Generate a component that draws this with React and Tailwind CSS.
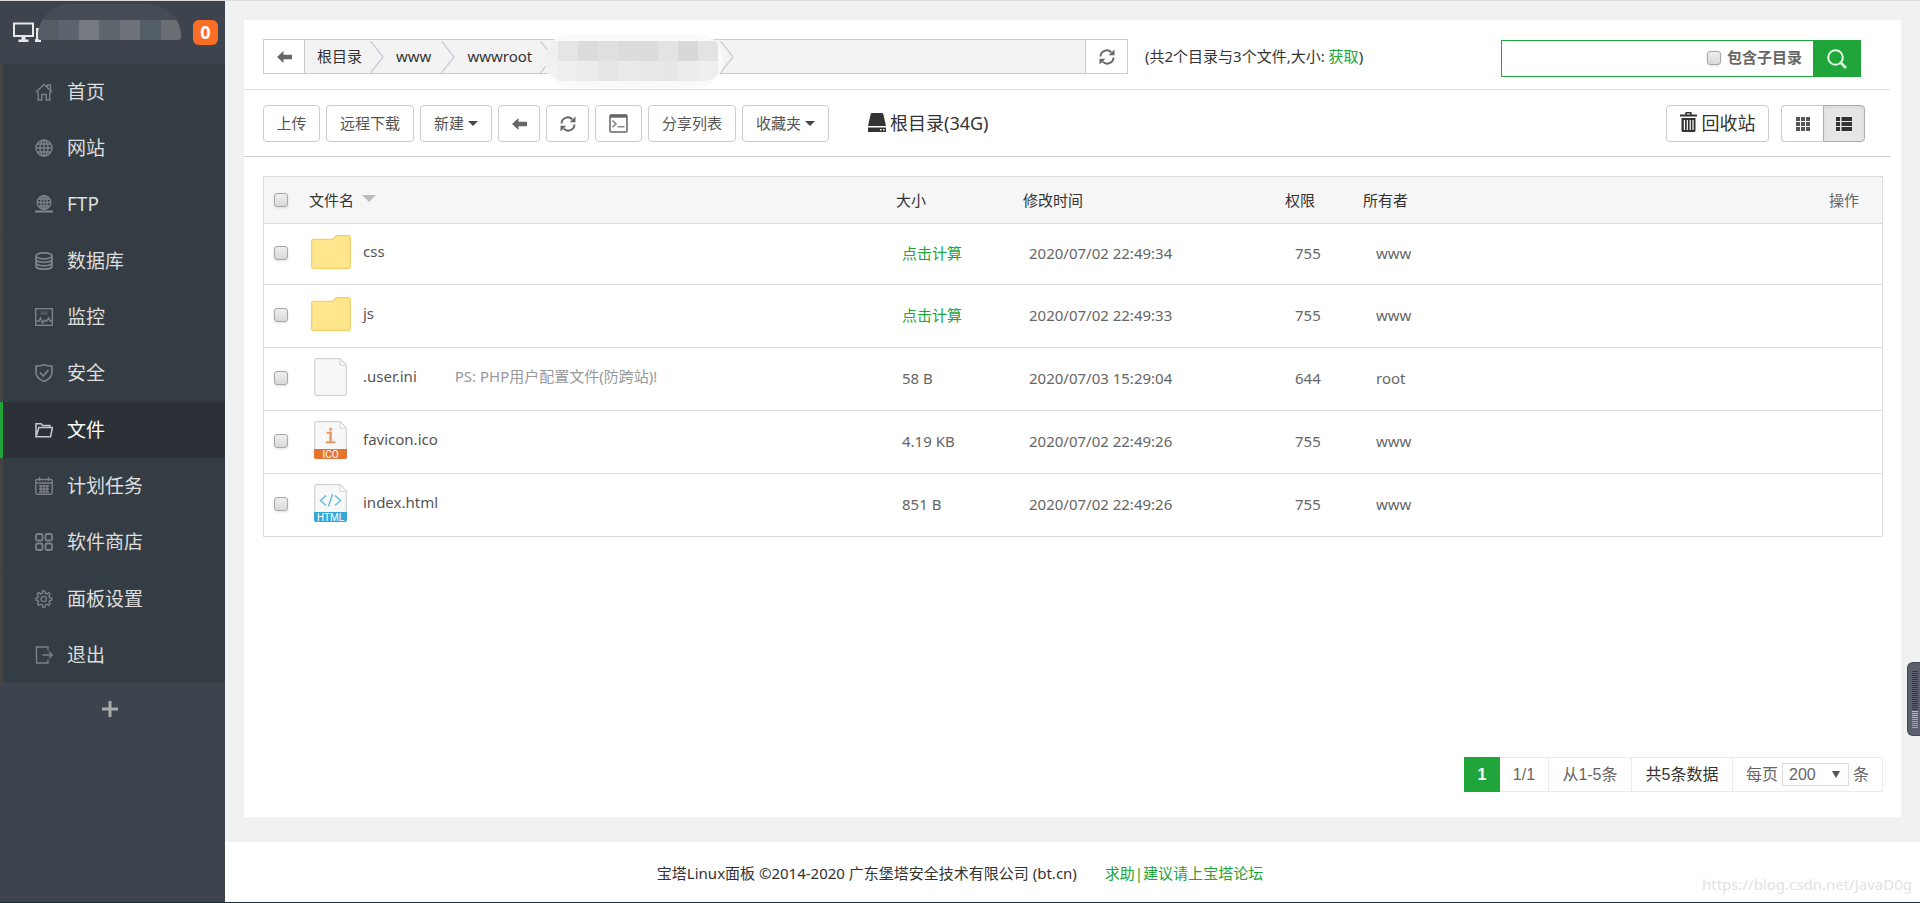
import { useState } from 'react'
import clsx from 'clsx'

const stroke = { fill: 'none', stroke: 'currentColor', strokeWidth: 1.4 }

const menuIcons = {
  home: (
    <>
      <path d="M.8 9.3 9 1.5l8.2 7.8M12.5 4.5V2h3v5.2" />
      <path d="M3.2 8.5V17h3.6v-5.5h4.4V17h3.6V8.5" />
    </>
  ),
  site: (
    <>
      <circle cx="9" cy="9" r="8" />
      <ellipse cx="9" cy="9" rx="4" ry="8" />
      <path d="M9 1v16M1 9h16M2.2 5h13.6M2.2 13h13.6" />
    </>
  ),
  ftp: (
    <>
      <circle cx="9" cy="7.5" r="6.8" />
      <ellipse cx="9" cy="7.5" rx="3.2" ry="6.8" />
      <path d="M9 1v14M2.2 7.5h13.6M3.4 4h11.2M3.4 11h11.2" />
      <path d="M0 16.5h18" strokeWidth="2.2" />
    </>
  ),
  database: (
    <g strokeWidth="1.7">
      <ellipse cx="9" cy="3.8" rx="8" ry="3" />
      <path d="M1 3.8v10.4c0 1.7 3.6 3 8 3s8-1.3 8-3V3.8M1 7.3c0 1.7 3.6 3 8 3s8-1.3 8-3M1 10.8c0 1.7 3.6 3 8 3s8-1.3 8-3" />
    </g>
  ),
  monitor: (
    <>
      <rect x=".7" y=".7" width="16.6" height="16.6" />
      <path d="M1 13h3l1.5-3 2 5 2-3 2 1.5L13.5 10l1.5 3h2" />
      <path d="M5.5 4h7M5.5 6h7" strokeWidth="1" opacity=".7" />
    </>
  ),
  shield: (
    <>
      <path d="M9 .8c2.5 1 5.3 1.3 8 1.3v6.4c0 4.2-3.5 7.1-8 9-4.5-1.9-8-4.800-8-9V2.100C3.700 2.100 6.500 1.800 9 .8Z" strokeWidth="1.7" />
      <path d="m5 8.500 3.200 3.500 5.300-6" strokeWidth="1.8" />
    </>
  ),
  folder: <path d="M1 15.800V2.800h5l1.600 1.700h7.200v2M1 15.800 3.900 6.500h13.600l-2 9.300Z" strokeWidth="1.600" />,
  calendar: (
    <>
      <rect x=".8" y="2.500" width="16.400" height="14.700" rx="1.500" />
      <path d="M1 6h16M4.500 0v4M13.500 0v4M4 9h10M4 12h10M4 15h10M6 8v7.500M9 8v7.500M12 8v7.500" />
    </>
  ),
  apps: (
    <g strokeWidth="1.800">
      <rect x="1" y="1" width="6.500" height="6.500" rx="1.500" />
      <rect x="10.500" y="1" width="6.500" height="6.500" rx="1.500" />
      <rect x="1" y="10.500" width="6.500" height="6.500" rx="1.500" />
      <rect x="10.500" y="10.500" width="6.500" height="6.500" rx="1.500" />
    </g>
  ),
  gear: (
    <>
      <path d="m7.500 1-.4 2.200-1.500.7-1.900-1.200-1.500 1.500 1.200 1.900-.7 1.500L1 8v2.100l1.900.4.7 1.500-1.200 1.900 1.500 1.500 1.900-1.200 1.500.7.400 2.100h2.100l.4-2.100 1.500-.7 1.900 1.200 1.500-1.500-1.200-1.900.7-1.500 2.200-.4V8l-2.200-.4-.7-1.500 1.200-1.900-1.500-1.500-1.900 1.200-1.500-.7L9.600 1Z" />
      <circle cx="8.800" cy="9" r="2.600" />
    </>
  ),
  exit: <path d="M13 4.500V1H1.500v16H13v-3.500M7.500 9H17M14 5.800 17.200 9 14 12.200" />,
}

const menu = [
  { icon: 'home', label: '首页' },
  { icon: 'site', label: '网站' },
  { icon: 'ftp', label: 'FTP' },
  { icon: 'database', label: '数据库' },
  { icon: 'monitor', label: '监控' },
  { icon: 'shield', label: '安全' },
  { icon: 'folder', label: '文件', active: true },
  { icon: 'calendar', label: '计划任务' },
  { icon: 'apps', label: '软件商店' },
  { icon: 'gear', label: '面板设置' },
  { icon: 'exit', label: '退出' },
]

const files = [
  { name: 'css', type: 'dir', time: '2020/07/02 22:49:34', mode: '755', owner: 'www' },
  { name: 'js', type: 'dir', time: '2020/07/02 22:49:33', mode: '755', owner: 'www' },
  { name: '.user.ini', type: 'file', size: '58 B', time: '2020/07/03 15:29:04', mode: '644', owner: 'root', note: 'PS: PHP用户配置文件(防跨站)!' },
  { name: 'favicon.ico', type: 'ico', size: '4.19 KB', time: '2020/07/02 22:49:26', mode: '755', owner: 'www' },
  { name: 'index.html', type: 'html', size: '851 B', time: '2020/07/02 22:49:26', mode: '755', owner: 'www' },
]

function ArrowLeft() {
  return (
    <svg viewBox="0 0 15 12" className="w-[15px] h-3 text-[#666]" fill="currentColor">
      <path d="M0 6 6.500 0v3.800H15v4.400H6.500V12Z" />
    </svg>
  )
}

function Refresh() {
  return (
    <svg viewBox="0 0 16 16" className="w-4 h-4 text-[#666]" fill="none" stroke="currentColor" strokeWidth="1.900">
      <path d="M1.500 7.500A6.300 6.300 0 0 1 12.300 3.300M14.500 8.500A6.300 6.300 0 0 1 3.700 12.700" />
      <path d="M15.500.5v5.800H9.700ZM.5 15.500V9.700h5.800Z" fill="currentColor" stroke="none" />
    </svg>
  )
}

function Terminal() {
  return (
    <svg viewBox="0 0 19 19" className="w-[19px] h-[19px] text-[#8a8a8a]" fill="none" stroke="currentColor" strokeWidth="2">
      <rect x="1" y="1" width="17" height="17" rx="1.500" />
      <path d="M1 2.200h17" strokeWidth="3" stroke="#666" />
      <path d="m3.500 6.500 3.500 3.300-3.500 3.300M8.500 12.800h7" strokeWidth="1.600" />
    </svg>
  )
}

function Disk() {
  return (
    <svg viewBox="0 0 18 19" className="w-[18px] h-[19px] mb-[3px]" fill="currentColor">
      <path d="M4 0h10q1 0 1.300 1L18 13H0L2.700 1Q3 0 4 0Z" />
      <path fillRule="evenodd" d="M0 14.500h18V19H0Zm12 1.500v1.500h1.500V16Zm3 0v1.500h1.500V16Z" />
    </svg>
  )
}

function Trash() {
  return (
    <svg viewBox="0 0 17 20" className="w-[17px] h-5 mb-1" fill="currentColor">
      <path fillRule="evenodd" d="M0 2.500h5.200V1q0-1 1-1h4.600q1 0 1 1v1.500H17v2H0ZM6.800 1.500v1h3.400v-1Z" />
      <path fillRule="evenodd" d="M1.500 6h14v12.500q0 1.500-1.500 1.500H3q-1.500 0-1.500-1.500ZM3.800 8v10h1.200V8Zm2.900 0v10h1.200V8Zm2.900 0v10h1.200V8Zm2.800 0v10h1.200V8Z" />
    </svg>
  )
}

function Chevron() {
  return (
    <svg viewBox="0 0 14 32" className="w-[14px] h-8 shrink-0" fill="none" stroke="#cfcfda" strokeWidth="1.500">
      <path d="M.5 0 13 16 .5 32" />
    </svg>
  )
}

function Caret() {
  return <span className="inline-block ml-1 border-x-[5px] border-t-[5px] border-x-transparent border-t-[#444]" />
}

function Checkbox({ label }) {
  return (
    <input type="checkbox" aria-label={label}
      className="appearance-none block w-[14px] h-[14px] shrink-0 rounded-[3px] border border-[#a8a8a8]
        bg-linear-to-b from-[#eee] to-[#d9d9d9] shadow-sm checked:bg-[#20a53a]" />
  )
}

function FileIcon({ type }) {
  if (type === 'dir') {
    return (
      <svg viewBox="0 0 40 34" className="w-10 h-[34px]">
        <path d="M.7 6q0-1.700 1.700-1.700H22l3.200-3.600h12.400q1.700 0 1.700 1.700v29.200q0 1.700-1.700 1.700H2.400Q.7 33.300.7 31.600Z"
          fill="#ffe68c" stroke="#f3cf6b" strokeWidth="1.300" />
      </svg>
    )
  }
  return (
    <svg viewBox="0 0 33 38" className="w-[33px] h-[38px]">
      <path d="M2.500.7h23.500l6.300 6.500v28.300q0 1.800-1.800 1.800h-28Q.7 37.300.7 35.500v-33Q.7.700 2.500.7Z"
        fill="#f8f8f8" stroke="#d3d3d3" strokeWidth="1.200" />
      <path d="M26 .7v6.500h6.300Z" fill="#fff" stroke="#d3d3d3" />
      {type === 'ico' && (
        <>
          <path d="M0 28h33v8q0 2-2 2H2q-2 0-2-2Z" fill="#e2742f" />
          <text x="16.500" y="22" textAnchor="middle" fontSize="20" fontFamily="DejaVu Sans Mono, monospace" fill="#e99362" stroke="#e99362" strokeWidth=".5">i</text>
          <text x="16.500" y="36.500" textAnchor="middle" fontSize="10" fontFamily="Roboto, sans-serif" fill="#fff">ICO</text>
        </>
      )}
      {type === 'html' && (
        <>
          <path d="M0 28h33v8q0 2-2 2H2q-2 0-2-2Z" fill="#35a6da" />
          <path d="m12 11.500-5.500 5 5.500 5M21 11.500l5.500 5-5.500 5M18.500 10l-4 12.500" fill="none" stroke="#67bce2" strokeWidth="1.500" />
          <text x="16.500" y="36.500" textAnchor="middle" fontSize="10" fontFamily="Roboto, sans-serif" fill="#fff">HTML</text>
        </>
      )}
    </svg>
  )
}

function HiddenName() {
  const cells = ['#555c63', '#5d6470', '#757981', '#5e666e', '#6d7379', '#535e67', '#6a6e73']
  return (
    <div className="absolute left-[38px] top-[3px] w-[143px] h-9 rounded-t-[32px] rounded-b-[3px] overflow-hidden bg-[#454c55] pt-4 flex">
      {cells.map((c, i) => <span key={i} className="w-5 h-5 shrink-0 grow" style={{ background: c }} />)}
    </div>
  )
}

function HiddenFolder() {
  const cells = [
    '#f0f0f0', '#e5e5e5', '#dcdcdc', '#dee0df', '#dcdcdc', '#dcdcdc', '#e3e3e3', '#d7d9d8', '#e3e3e3',
    '#f1f1f1', '#eeeeee', '#ececec', '#e6e6e6', '#eaeaea', '#e8e8e8', '#e7e7e7', '#ececec', '#efefef',
  ]
  return (
    <div className="absolute left-[5px] -top-2 w-[178px] h-[55px] rounded-[28px] overflow-hidden bg-[#fafafa] pt-2">
      <div className="grid grid-cols-[13px_repeat(8,20px)] rounded-b-[20px] overflow-hidden">
        {cells.map((c, i) => <span key={i} className="h-5" style={{ background: c }} />)}
      </div>
    </div>
  )
}

function ToolButton({ children, label, className }) {
  return (
    <button aria-label={label}
      className={clsx('h-[37px] flex items-center justify-center rounded border border-[#ccc] bg-white text-[15px] text-[#555] hover:bg-gray-100', className)}>
      {children}
    </button>
  )
}

function Sidebar() {
  return (
    <aside className="w-[225px] shrink-0 bg-[#3d444d]">
      <div className="relative h-[63px]">
        <svg viewBox="0 0 29 20" className="absolute left-3 top-[21px] w-[29px] h-5">
          <path d="M2 1.500h19v12.500H2Z" fill="none" stroke="#e8e8e8" strokeWidth="2" />
          <path d="M9.500 15h4v2.500h3V20h-10v-2.500h3Z" fill="#e8e8e8" />
          <path d="M24 6h5v14h-6v-3h1Z" fill="#e8e8e8" />
        </svg>
        <HiddenName />
        <span className="absolute left-[193px] top-[19px] w-[25px] h-[25px] rounded-md bg-[#fc6d26] text-white text-[18px] font-bold leading-6 text-center">0</span>
      </div>
      <nav className="bg-[#353d44]">
        {menu.map(item => (
          <a key={item.label} href="#"
            className={clsx('flex items-center h-14 pl-8 gap-[14px] nth-[3n]:mb-px border-l-[3px] text-[19px]',
              item.active ? 'border-[#20a53a] bg-[#2c3138] text-white' : 'border-[#444] text-[#dedede]')}>
            <svg viewBox="0 0 18 18" {...stroke}
              className={clsx('w-[18px] h-[18px] shrink-0', item.active ? 'text-[#c4c6c8]' : 'text-[#7c8185]')}>
              {menuIcons[item.icon]}
            </svg>
            {item.label}
          </a>
        ))}
      </nav>
      <button aria-label="添加" className="block w-full h-[52px] pr-[6px] text-[#aaa]">
        <svg viewBox="0 0 16 16" className="w-4 h-4 mx-auto" stroke="currentColor" strokeWidth="3">
          <path d="M8 0v16M0 8h16" />
        </svg>
      </button>
    </aside>
  )
}

function PathBar() {
  return (
    <div className="flex items-start pt-[19px] pl-[19px] pr-[29px] h-[70px] mr-[11px] border-b border-[#ddd]">
      <div className="flex h-[35px] w-[865px] border border-[#ccc] bg-[#f3f3f3] text-[15px]">
        <button aria-label="后退" className="w-[41px] flex items-center justify-center bg-white border-r border-[#ccc]">
          <ArrowLeft />
        </button>
        <div className="flex flex-1 items-center text-[#333]">
          <a href="#" className="pl-3 pr-2">根目录</a>
          <Chevron />
          <a href="#" className="pl-3 pr-[10px]">www</a>
          <Chevron />
          <a href="#" className="pl-3 pr-2">wwwroot</a>
          <div className="relative flex w-[194px] justify-between">
            <Chevron />
            <HiddenFolder />
            <Chevron />
          </div>
        </div>
        <button aria-label="刷新" className="w-[42px] flex items-center justify-center bg-white border-l border-[#ccc]">
          <Refresh />
        </button>
      </div>
      <p className="pl-[17px] text-[15px] leading-[34px] text-[#333]">
        (共2个目录与3个文件,大小: <a href="#" className="text-[#20a53a]">获取</a>)
      </p>
      <form className="flex w-[360px] h-[37px] mt-px ml-auto border border-[#20a53a]" onSubmit={e => e.preventDefault()}>
        <input type="text" aria-label="搜索" className="flex-1 min-w-0 px-2 outline-none text-[15px]" />
        <label className="flex items-center gap-[6px] pr-[11px] pb-[2px] text-[15px] font-bold text-[#666]">
          <Checkbox />
          包含子目录
        </label>
        <button aria-label="搜索" className="w-[47px] flex items-center justify-center bg-[#20a53a]">
          <svg viewBox="0 0 20 20" className="w-5 h-5" fill="none" stroke="#e2f5e6" strokeWidth="2">
            <circle cx="8.500" cy="8.500" r="7.300" />
            <path d="m14 14 5 5" strokeWidth="2.600" />
          </svg>
        </button>
      </form>
    </div>
  )
}

function Toolbar() {
  const [view, setView] = useState('list')
  return (
    <div className="flex items-start gap-[6px] pt-[15px] pl-[19px] pr-[25px] h-[67px] mr-[11px] border-b border-[#ccc]">
      <ToolButton className="w-[57px]">上传</ToolButton>
      <ToolButton className="w-[88px]">远程下载</ToolButton>
      <ToolButton className="w-[72px]">新建<Caret /></ToolButton>
      <ToolButton label="后退" className="w-[42px]"><ArrowLeft /></ToolButton>
      <ToolButton label="刷新" className="w-[43px]"><Refresh /></ToolButton>
      <ToolButton label="终端" className="w-[47px]"><Terminal /></ToolButton>
      <ToolButton className="w-[88px]">分享列表</ToolButton>
      <ToolButton className="w-[87px]">收藏夹<Caret /></ToolButton>
      <a href="#" className="flex items-center gap-1 h-[37px] ml-[33px] text-[18px] text-[#333]">
        <Disk />
        根目录(34G)
      </a>
      <button className="flex items-center justify-center gap-[5px] w-[103px] h-[37px] ml-auto mr-[6px] rounded border border-[#ccc] text-[18px] text-[#333]">
        <Trash />
        回收站
      </button>
      <div className="flex h-[37px]">
        <button aria-label="图标视图" onClick={() => setView('grid')}
          className={clsx('w-[42px] flex items-center justify-center rounded-l border border-r-0 text-[#555]',
            view === 'grid' ? 'border-[#adadad] bg-[#e6e6e6] inset-shadow-sm' : 'border-[#ccc] bg-white')}>
          <svg viewBox="0 0 14 14" className="w-[14px] h-[14px]" fill="currentColor">
            <path d="M0 0h4v4H0ZM5 0h4v4H5ZM10 0h4v4h-4ZM0 5h4v4H0ZM5 5h4v4H5ZM10 5h4v4h-4ZM0 10h4v4H0ZM5 10h4v4H5ZM10 10h4v4h-4Z" />
          </svg>
        </button>
        <button aria-label="列表视图" onClick={() => setView('list')}
          className={clsx('w-[42px] flex items-center justify-center rounded-r border text-[#333]',
            view === 'list' ? 'border-[#adadad] bg-[#e6e6e6] inset-shadow-sm' : 'border-[#ccc] bg-white')}>
          <svg viewBox="0 0 16 14" className="w-4 h-[14px]" fill="currentColor">
            <path d="M0 0h4v4H0ZM5.500 0H16v4H5.500ZM0 5h4v4H0ZM5.500 5H16v4H5.500ZM0 10h4v4H0ZM5.500 10H16v4H5.500Z" />
          </svg>
        </button>
      </div>
    </div>
  )
}

function FileTable() {
  return (
    <div className="mt-[19px] ml-[19px] mr-[18px] border border-b-0 border-[#ddd]">
      <table className="w-full table-fixed text-[15px] text-left text-[#666]">
        <colgroup>
          <col className="w-[45px]" />
          <col />
          <col className="w-[127px]" />
          <col className="w-[262px]" />
          <col className="w-[78px]" />
          <col className="w-[200px]" />
          <col className="w-[319px]" />
        </colgroup>
        <thead>
          <tr className="h-[46px] bg-[#f6f6f6] border-b border-[#ddd] text-[#333]">
            <th className="pl-[10px]"><Checkbox label="全选" /></th>
            <th className="font-normal">
              <button className="flex items-center gap-2">
                文件名
                <span className="mb-[2px] border-x-[7px] border-t-[7px] border-x-transparent border-t-[#bbb]" />
              </button>
            </th>
            <th className="font-normal">大小</th>
            <th className="font-normal">修改时间</th>
            <th className="font-normal">权限</th>
            <th className="font-normal">所有者</th>
            <th className="pr-[23px] font-normal text-right text-[#666]">操作</th>
          </tr>
        </thead>
        <tbody>
          {files.map(file => (
            <tr key={file.name} className="h-[63px] first:h-[61px] border-b border-[#ddd] hover:bg-gray-50">
              <td className="pl-[10px] pb-[2px]"><Checkbox label={file.name} /></td>
              <td className="pb-1">
                <div className="flex items-center">
                  <span className="w-[43px] mr-[11px] flex justify-center"><FileIcon type={file.type} /></span>
                  <a href="#" className="text-[#555]">{file.name}</a>
                  {file.note && <span className="ml-[38px] text-[#999]">{file.note}</span>}
                </div>
              </td>
              <td className="pl-[6px] pb-px">{file.size || <a href="#" className="text-[#20a53a]">点击计算</a>}</td>
              <td className="pl-[6px] pb-px">{file.time}</td>
              <td className="pl-[10px] pb-px">{file.mode}</td>
              <td className="pl-[13px] pb-px">{file.owner}</td>
              <td></td>
            </tr>
          ))}
        </tbody>
      </table>
    </div>
  )
}

function Pagination() {
  return (
    <div className="flex self-end mt-auto mr-[18px] mb-[25px] h-[35px] font-['Liberation_Sans','Noto_Sans_CJK_SC',sans-serif] text-[16px] leading-[33px] text-[#666]">
      <span className="w-9 text-center font-bold text-white bg-[#20a53a] leading-[35px]">1</span>
      <span className="w-[49px] text-center border border-l-0 border-[#ececec]">1/1</span>
      <span className="w-[83px] text-center border-y border-r border-[#ececec]">从1-5条</span>
      <span className="w-[100px] text-center border-y border-[#ececec] text-[#333]">共5条数据</span>
      <label className="flex items-center pl-[13px] pr-[13px] gap-1 border border-[#ececec]">
        每页
        <span className="relative flex">
          <select defaultValue="200" className="appearance-none w-[67px] h-[23px] pl-[6px] border border-[#ddd] text-[16px] leading-5 bg-white">
            <option>100</option>
            <option>200</option>
            <option>500</option>
          </select>
          <span className="absolute right-[9px] top-2 border-x-[4px] border-t-[7px] border-x-transparent border-t-[#555] pointer-events-none" />
        </span>
        条
      </label>
    </div>
  )
}

function LoadMeter() {
  const bars = Array.from({ length: 29 }, (_, i) => i)
  return (
    <div className="fixed right-0 top-[662px] w-[13px] h-[74px] rounded-l-md border border-r-0 border-[#454854] bg-[#5b5f6e]">
      <svg viewBox="0 0 6 58" className="w-[6px] h-[58px] mt-2 ml-1">
        {bars.map(i => (
          <rect key={i} x="0" y={i * 2} width="6" height="1" fill={i < 20 ? '#343843' : i < 24 ? '#86d98e' : '#4fd0b4'} />
        ))}
      </svg>
    </div>
  )
}

export default function App() {
  return (
    <div className="min-h-screen flex flex-col border-t border-t-[#d9d9de] border-b border-b-[#1b2a33] bg-[#f1f1f1] font-['Noto_Sans','Noto_Sans_CJK_SC',sans-serif]">
      <div className="flex flex-1">
        <Sidebar />
        <div className="flex-1 min-w-0 flex flex-col">
          <main className="flex-1 flex flex-col mt-[19px] ml-[19px] mr-[19px] mb-[25px] bg-white">
            <PathBar />
            <Toolbar />
            <FileTable />
            <Pagination />
          </main>
          <footer className="relative flex items-center justify-center gap-7 h-[60px] pt-[2px] pr-[225px] bg-white text-[15px] text-[#333]">
            <span>宝塔Linux面板 ©2014-2020 广东堡塔安全技术有限公司 (bt.cn)</span>
            <a href="#" className="text-[#20a53a]">求助|建议请上宝塔论坛</a>
            <span className="absolute right-2 bottom-[7px] text-[15px] text-[#e2e2e2]">https://blog.csdn.net/JavaD0g</span>
          </footer>
        </div>
      </div>
      <LoadMeter />
    </div>
  )
}
